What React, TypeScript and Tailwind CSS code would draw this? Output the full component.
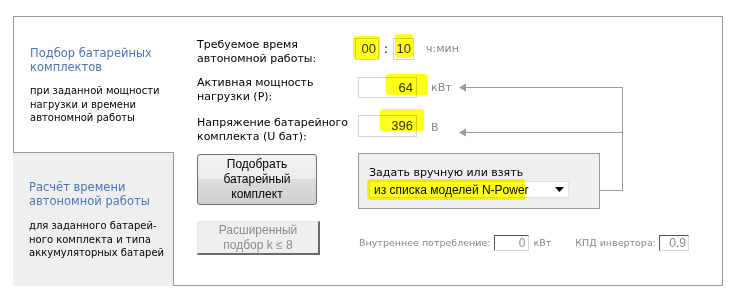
import React from "react";

const Highlight = ({ className }: { className: string }) => (
  <div className={`pointer-events-none absolute rounded-[3px] bg-[#ffff1a] mix-blend-multiply blur-[0.6px] ${className}`} />
);

export default function App() {
  return (
    <div className="h-[303px] w-[740px] bg-white pl-[13px] pt-[16px] font-['DejaVu_Sans',sans-serif] text-black antialiased">
      <div className="flex h-[270px] w-[710px]">
        {/* Tabs */}
        <div className="flex w-[161px] flex-col">
          <div className="h-[136px] border-l border-t border-[#999] bg-white pl-[16px] pt-[29px]">
            <div className="text-[11.5px] leading-[14px] text-[#4a78b6]">
              Подбор батарейных
              <br />
              комплектов
            </div>
            <div className="mt-[10px] text-[10px] leading-[13.5px]">
              при заданной мощности
              <br />
              нагрузки и времени
              <br />
              автономной работы
            </div>
          </div>
          <div className="flex-1 border-r border-t border-[#999] bg-[#efefef] pl-[16px] pt-[27px]">
            <div className="text-[11.5px] leading-[14px] text-[#4a78b6]">
              Расчёт времени
              <br />
              автономной работы
            </div>
            <div className="mt-[11px] whitespace-nowrap text-[10px] leading-[13.5px]">
              для заданного батарей-
              <br />
              ного комплекта и типа
              <br />
              аккумуляторных батарей
            </div>
          </div>
        </div>

        {/* Content */}
        <div className="relative flex-1 border-b border-r border-t border-[#999] pl-[23px] pt-[21px]">
          {/* Row 1 */}
          <div className="flex items-start">
            <div className="w-[158px] whitespace-nowrap text-[11px] leading-[14px]">
              Требуемое время
              <br />
              автономной работы:
            </div>
            <div className="flex h-[22px] w-[24px] items-center justify-end border border-[#d4d4d4] pr-[2px] font-['Liberation_Sans',sans-serif] text-[13px] text-[#333]">
              00
            </div>
            <div className="w-[14px] text-center text-[12px] leading-[22px]">:</div>
            <div className="flex h-[22px] w-[21px] items-center justify-end border border-[#d4d4d4] pr-[2px] font-['Liberation_Sans',sans-serif] text-[13px] text-[#333]">
              10
            </div>
            <div className="ml-[12px] text-[11px] leading-[22px] text-[#888]">ч:мин</div>
          </div>

          {/* Row 2 */}
          <div className="mt-[10px] flex items-start">
            <div className="w-[161px] whitespace-nowrap text-[11px] leading-[14px]">
              Активная мощность
              <br />
              нагрузки (P):
            </div>
            <div className="mt-[1px] flex h-[21px] w-[59px] items-center justify-end border border-[#d4d4d4] pr-[3px] font-['Liberation_Sans',sans-serif] text-[13px] text-[#333]">
              64
            </div>
            <div className="ml-[14px] mt-[1px] text-[11px] leading-[22px] text-[#888]">кВт</div>
          </div>

          {/* Row 3 */}
          <div className="mt-[11px] flex items-start">
            <div className="w-[161px] whitespace-nowrap pt-[1px] text-[11px] leading-[14px]">
              Напряжение батарейного
              <br />
              комплекта (U бат):
            </div>
            <div className="flex h-[22px] w-[59px] items-center justify-end border border-[#d4d4d4] pr-[3px] font-['Liberation_Sans',sans-serif] text-[13px] text-[#333]">
              396
            </div>
            <div className="ml-[14px] mt-[2px] text-[11px] leading-[22px] text-[#888]">В</div>
          </div>

          {/* Buttons + source panel */}
          <div className="mt-[9px] flex items-start">
            <button className="mt-[1px] flex h-[51px] w-[120px] flex-col items-center justify-center rounded-[3px] border border-[#707070] bg-[linear-gradient(#f2f2f2_0%,#ebebeb_50%,#dddddd_50%,#cfcfcf_100%)] font-['Liberation_Sans',sans-serif] text-[12px] leading-[15px] text-black">
              <span>Подобрать</span>
              <span>батарейный</span>
              <span>комплект</span>
            </button>
            <div className="ml-[41px] h-[56px] w-[242px] border border-[#999] bg-[#efefef] pl-[10px] pt-[12px]">
              <div className="text-[11px] leading-[14px]">Задать вручную или взять</div>
              <div className="mt-[1px] flex h-[17px] w-[200px] items-center justify-between border border-[#e2e2e2] bg-white pl-[4px] pr-[4px] font-['Liberation_Sans',sans-serif] text-[12px]">
                <span>из списка моделей N-Power</span>
                <svg width="9" height="5" viewBox="0 0 9 5">
                  <path d="M0 0H9L4.5 5Z" fill="#000" />
                </svg>
              </div>
            </div>
          </div>

          {/* Bottom row */}
          <div className="mt-[12px] flex items-start">
            <button
              disabled
              className="flex h-[34px] w-[123px] flex-col items-center justify-center border-b-2 border-l border-r-2 border-t border-b-[#6b6b6b] border-l-[#e6e6e6] border-r-[#6b6b6b] border-t-[#e6e6e6] bg-[#efefef] font-['Liberation_Sans',sans-serif] text-[12px] leading-[15px] text-[#8c8c8c]"
            >
              <span>Расширенный</span>
              <span>подбор k ≤ 8</span>
            </button>
            <div className="ml-[39px] mt-[14px] flex items-center whitespace-nowrap text-[9.5px] text-[#8a8a8a]">
              <span>Внутреннее потребление:</span>
              <div className="ml-[3px] flex h-[16px] w-[35px] items-center justify-end border-b border-l border-r border-t border-b-[#dcdcdc] border-l-[#555] border-r-[#dcdcdc] border-t-[#555] pr-[2px] font-['Liberation_Sans',sans-serif] text-[12px] text-[#7f8fa0]">
                0
              </div>
              <span className="ml-[5px]">кВт</span>
              <span className="ml-[24px]">КПД инвертора:</span>
              <div className="ml-[3px] flex h-[16px] w-[30px] items-center justify-end border-b border-l border-r border-t border-b-[#dcdcdc] border-l-[#555] border-r-[#dcdcdc] border-t-[#555] pr-[2px] font-['Liberation_Sans',sans-serif] text-[12px] text-[#7f8fa0]">
                0.9
              </div>
            </div>
          </div>

          {/* Connector lines */}
          <svg className="pointer-events-none absolute left-[-1px] top-[-1px]" width="549" height="270" shapeRendering="crispEdges">
            <g stroke="#999" strokeWidth="1" fill="none">
              <path d="M425.5 174.5H449.5V71.5H292" />
              <path d="M449.5 116.5H292" />
            </g>
            <path d="M286 71.5L293 67.5V75.5Z" fill="#999" shapeRendering="auto" />
            <path d="M286 116.5L293 112.5V120.5Z" fill="#999" shapeRendering="auto" />
          </svg>

          {/* Marker highlights */}
          <Highlight className="left-[179px] top-[19px] h-[23px] w-[27px]" />
          <Highlight className="left-[221px] top-[17px] h-[24px] w-[18px]" />
          <Highlight className="left-[212px] top-[57px] h-[21px] w-[42px]" />
          <Highlight className="left-[206px] top-[92px] h-[22px] w-[44px]" />
          <Highlight className="left-[193px] top-[162px] h-[21px] w-[158px]" />
        </div>
      </div>
    </div>
  );
}
